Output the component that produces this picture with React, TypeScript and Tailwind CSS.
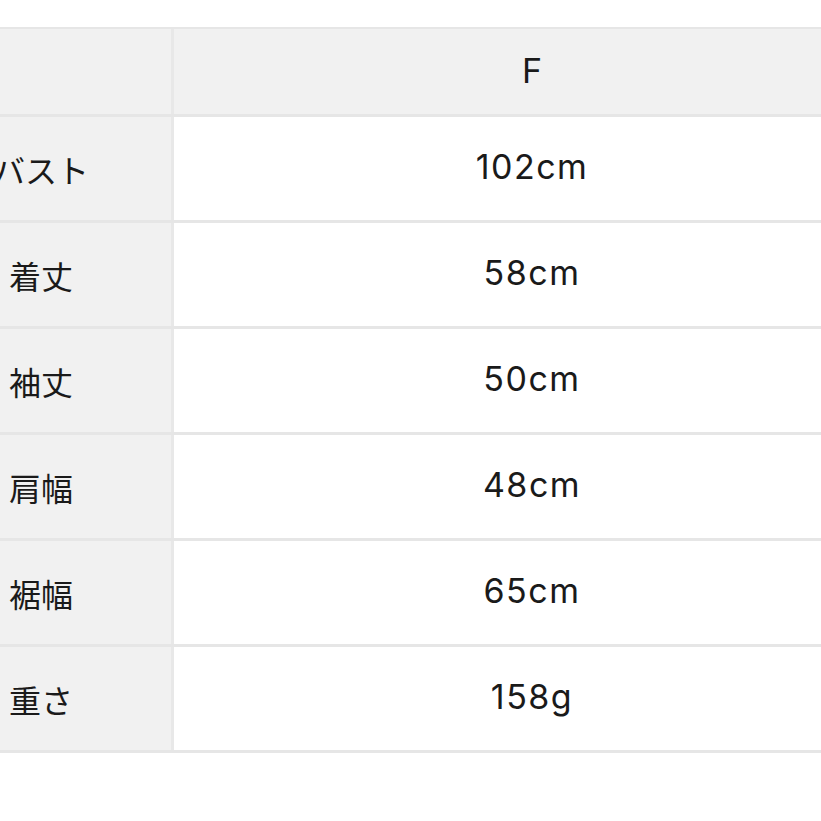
import React from "react";

const rows: [string, string][] = [
  ["バスト", "102cm"],
  ["着丈", "58cm"],
  ["袖丈", "50cm"],
  ["肩幅", "48cm"],
  ["裾幅", "65cm"],
  ["重さ", "158g"],
];

const jp = { fontFamily: '"Noto Sans CJK JP", "Noto Sans", sans-serif' };
const latin = { fontFamily: 'Inter, "Noto Sans CJK JP", sans-serif' };

export default function App() {
  return (
    <div className="w-[821px] h-[821px] bg-white overflow-hidden text-[#1a1a1a]" style={jp}>
      <div className="pt-[27px] ml-[-88px] w-[978px]">
        <div className="border-t-2 border-b-[3px] border-[#e6e6e6] flex h-[90px]">
          <div className="w-[262px] bg-[#f1f1f1] border-r-[3px] border-[#e8e8e8]" />
          <div className="flex-1 bg-[#f1f1f1] flex items-center justify-center text-[34px] pb-[2px]" style={latin}>F</div>
        </div>
        {rows.map(([label, value]) => (
          <div key={label} className="flex h-[106px] border-b-[3px] border-[#e6e6e6]">
            <div className="w-[262px] bg-[#f1f1f1] border-r-[3px] border-[#e8e8e8] flex items-center justify-center text-[32px] pr-[1px]">
              <span className="w-[84px] text-center whitespace-nowrap flex justify-center">{label}</span>
            </div>
            <div className="flex-1 bg-white flex items-center justify-center text-[34px] tracking-[1.5px] pb-[4px]" style={latin}>{value}</div>
          </div>
        ))}
      </div>
    </div>
  );
}
